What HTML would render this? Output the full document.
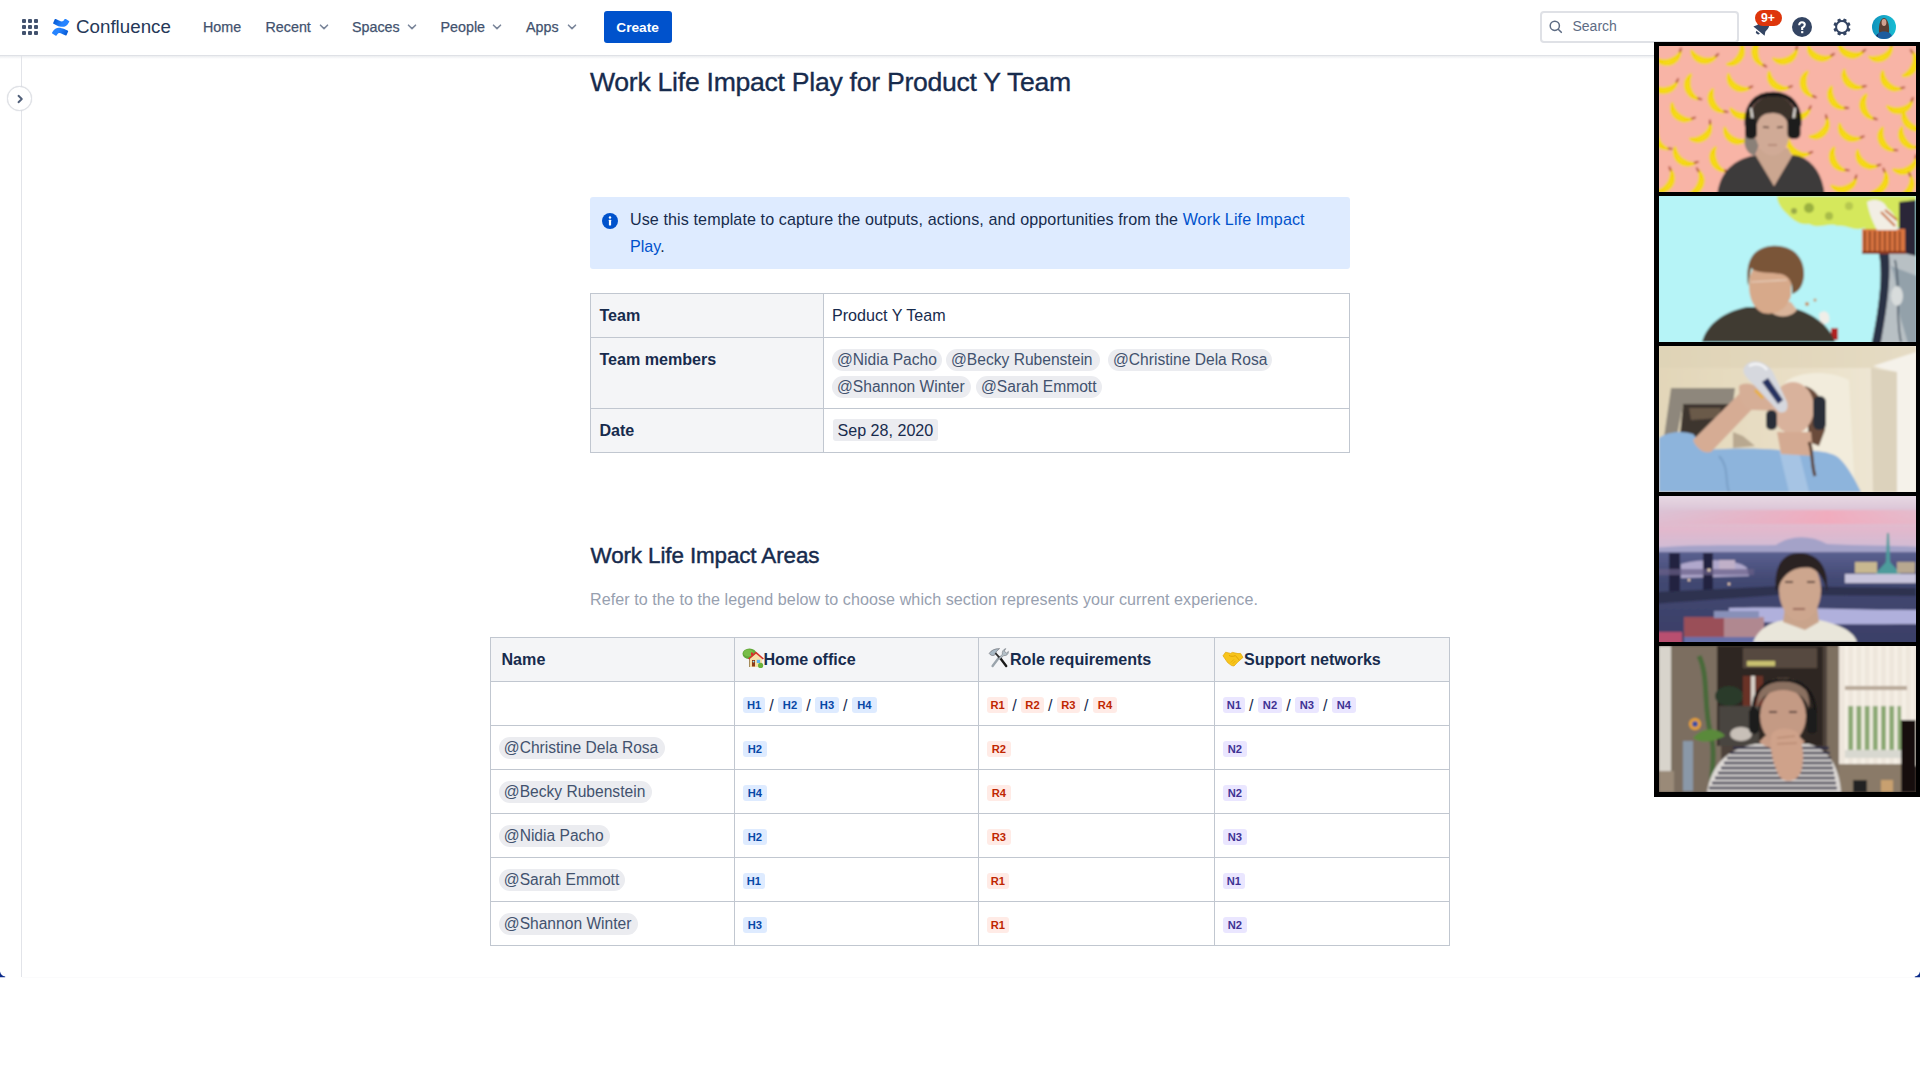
<!DOCTYPE html>
<html><head><meta charset="utf-8"><style>
html,body{margin:0;padding:0;}
body{width:1920px;height:1080px;overflow:hidden;position:relative;background:#fff;font-family:"Liberation Sans", sans-serif;}
.t{position:absolute;white-space:nowrap;}
</style></head><body>
<div style="position:absolute;left:0px;top:0px;width:1920px;height:55px;background:#fff;"></div>
<div style="position:absolute;left:0px;top:55px;width:1920px;height:1px;background:#DFE1E6;"></div>
<div style="position:absolute;left:0px;top:56px;width:1920px;height:3px;background:linear-gradient(rgba(9,30,66,0.08),rgba(9,30,66,0));"></div>
<div style="position:absolute;left:22px;top:19px;width:4px;height:4px;background:#42526E;border-radius:1px;"></div>
<div style="position:absolute;left:22px;top:25px;width:4px;height:4px;background:#42526E;border-radius:1px;"></div>
<div style="position:absolute;left:22px;top:31px;width:4px;height:4px;background:#42526E;border-radius:1px;"></div>
<div style="position:absolute;left:28px;top:19px;width:4px;height:4px;background:#42526E;border-radius:1px;"></div>
<div style="position:absolute;left:28px;top:25px;width:4px;height:4px;background:#42526E;border-radius:1px;"></div>
<div style="position:absolute;left:28px;top:31px;width:4px;height:4px;background:#42526E;border-radius:1px;"></div>
<div style="position:absolute;left:34px;top:19px;width:4px;height:4px;background:#42526E;border-radius:1px;"></div>
<div style="position:absolute;left:34px;top:25px;width:4px;height:4px;background:#42526E;border-radius:1px;"></div>
<div style="position:absolute;left:34px;top:31px;width:4px;height:4px;background:#42526E;border-radius:1px;"></div>
<svg style="position:absolute;left:51.5px;top:19px" width="18.5" height="16.5" viewBox="0 0 18 16">
<defs><linearGradient id="cgt" x1="0" y1="0" x2="1" y2="0.3"><stop offset="0" stop-color="#0052CC"/><stop offset="0.7" stop-color="#2684FF"/></linearGradient>
<linearGradient id="cgb" x1="1" y1="1" x2="0" y2="0.7"><stop offset="0" stop-color="#0052CC"/><stop offset="0.7" stop-color="#2684FF"/></linearGradient></defs>
<path d="M0.6 12.4c-.2.3-.4.7-.6 1 -.1.3 0 .6.3.8l3.3 2c.3.2.6.1.8-.2.1-.2.3-.5.5-.8 1.3-2.2 2.7-1.9 5.1-.7l3.3 1.6c.3.1.6 0 .8-.3l1.6-3.6c.1-.3 0-.6-.3-.8-.7-.3-2.1-1-3.4-1.6C7.3 7.5 3.1 7.7.6 12.4z" fill="url(#cgb)"/>
<path d="M17.4 3.6c.2-.3.4-.7.6-1 .1-.3 0-.6-.3-.8l-3.3-2c-.3-.2-.6-.1-.8.2-.1.2-.3.5-.5.8-1.3 2.2-2.7 1.9-5.1.7L4.7-.1c-.3-.1-.6 0-.8.3L2.3 3.8c-.1.3 0 .6.3.8.7.3 2.1 1 3.4 1.6 4.7 2.3 8.9 2.1 11.4-2.6z" fill="url(#cgt)" transform="translate(-1.2,0)"/>
</svg>
<div class="t" style="left:76px;top:18.03px;font-size:18.75px;line-height:18.75px;color:#253858;font-weight:400;">Confluence</div>
<div class="t" style="left:203px;top:19.80px;font-size:14.3px;line-height:14.3px;color:#42526E;font-weight:400;-webkit-text-stroke:0.25px #42526E;">Home</div>
<div class="t" style="left:265.5px;top:19.80px;font-size:14.3px;line-height:14.3px;color:#42526E;font-weight:400;-webkit-text-stroke:0.25px #42526E;">Recent</div>
<div class="t" style="left:352px;top:19.80px;font-size:14.3px;line-height:14.3px;color:#42526E;font-weight:400;-webkit-text-stroke:0.25px #42526E;">Spaces</div>
<div class="t" style="left:440.5px;top:19.80px;font-size:14.3px;line-height:14.3px;color:#42526E;font-weight:400;-webkit-text-stroke:0.25px #42526E;">People</div>
<div class="t" style="left:526px;top:19.80px;font-size:14.3px;line-height:14.3px;color:#42526E;font-weight:400;-webkit-text-stroke:0.25px #42526E;">Apps</div>
<svg style="position:absolute;left:319px;top:22px" width="10" height="10" viewBox="0 0 10 10"><path d="M1.5 3.2 L5 6.6 L8.5 3.2" fill="none" stroke="#7A869A" stroke-width="1.6" stroke-linecap="round" stroke-linejoin="round"/></svg>
<svg style="position:absolute;left:407px;top:22px" width="10" height="10" viewBox="0 0 10 10"><path d="M1.5 3.2 L5 6.6 L8.5 3.2" fill="none" stroke="#7A869A" stroke-width="1.6" stroke-linecap="round" stroke-linejoin="round"/></svg>
<svg style="position:absolute;left:492px;top:22px" width="10" height="10" viewBox="0 0 10 10"><path d="M1.5 3.2 L5 6.6 L8.5 3.2" fill="none" stroke="#7A869A" stroke-width="1.6" stroke-linecap="round" stroke-linejoin="round"/></svg>
<svg style="position:absolute;left:566.5px;top:22px" width="10" height="10" viewBox="0 0 10 10"><path d="M1.5 3.2 L5 6.6 L8.5 3.2" fill="none" stroke="#7A869A" stroke-width="1.6" stroke-linecap="round" stroke-linejoin="round"/></svg>
<div style="position:absolute;left:604px;top:11px;width:68px;height:32px;background:#0052CC;border-radius:3px;"></div>
<div class="t" style="left:616.3px;top:21.20px;font-size:13.7px;line-height:13.7px;color:#fff;font-weight:700;">Create</div>
<div style="position:absolute;left:1540px;top:11px;width:199px;height:32px;box-sizing:border-box;border:2px solid #DFE1E6;border-radius:4px;background:#fff;"></div>
<svg style="position:absolute;left:1549px;top:20px" width="14" height="14" viewBox="0 0 14 14"><circle cx="5.8" cy="5.8" r="4.6" fill="none" stroke="#5E6C84" stroke-width="1.5"/><path d="M9.2 9.2 L12.3 12.3" stroke="#5E6C84" stroke-width="1.6" stroke-linecap="round"/></svg>
<div class="t" style="left:1572.5px;top:19.15px;font-size:14px;line-height:14px;color:#5E6C84;font-weight:400;">Search</div>
<svg style="position:absolute;left:1751px;top:16px" width="22.5" height="22.5" viewBox="0 0 24 24"><g transform="rotate(40 12 12)"><path d="M12 3.5 C8.6 3.5 6.4 6.2 6.4 9.6 V13.6 L4.2 17.4 H19.8 L17.6 13.6 V9.6 C17.6 6.2 15.4 3.5 12 3.5Z" fill="#344563"/><path d="M9.6 18.8 a2.4 2.4 0 0 0 4.8 0Z" fill="#344563"/></g></svg>
<div style="position:absolute;left:1755px;top:10px;width:27px;height:16px;background:#DE350B;border-radius:8px;box-shadow:0 0 0 0px #fff;"></div>
<div class="t" style="left:1761px;top:12.27px;font-size:12.2px;line-height:12.2px;color:#fff;font-weight:700;">9+</div>
<svg style="position:absolute;left:1792px;top:17px" width="20" height="20" viewBox="0 0 20 20"><circle cx="10" cy="10" r="10" fill="#344563"/><path d="M7.2 8.3 C7.2 6.4 8.5 5.2 10 5.2 C11.6 5.2 12.8 6.4 12.8 7.8 C12.8 9.4 11.6 10 10.4 10.6 L10.2 10.7 L10.2 13" fill="none" stroke="#fff" stroke-width="2.1" stroke-linecap="butt"/><rect x="9.1" y="14.1" width="2.2" height="2.1" fill="#fff"/></svg>
<svg style="position:absolute;left:1831.7px;top:16.5px" width="20" height="20" viewBox="0 0 20 20"><g transform="translate(10,10)" fill="#344563">
<circle r="6.9"/><rect x="-1.7" y="-8.7" width="3.4" height="4" rx="0.9" transform="rotate(22.5)"/><rect x="-1.7" y="-8.7" width="3.4" height="4" rx="0.9" transform="rotate(67.5)"/><rect x="-1.7" y="-8.7" width="3.4" height="4" rx="0.9" transform="rotate(112.5)"/><rect x="-1.7" y="-8.7" width="3.4" height="4" rx="0.9" transform="rotate(157.5)"/><rect x="-1.7" y="-8.7" width="3.4" height="4" rx="0.9" transform="rotate(202.5)"/><rect x="-1.7" y="-8.7" width="3.4" height="4" rx="0.9" transform="rotate(247.5)"/><rect x="-1.7" y="-8.7" width="3.4" height="4" rx="0.9" transform="rotate(292.5)"/><rect x="-1.7" y="-8.7" width="3.4" height="4" rx="0.9" transform="rotate(337.5)"/><circle r="4.9" fill="#fff"/></g></svg>
<svg style="position:absolute;left:1872px;top:15px" width="24" height="24" viewBox="0 0 24 24"><defs><clipPath id="av"><circle cx="12" cy="12" r="12"/></clipPath><linearGradient id="avg" x1="0" x2="1"><stop offset="0" stop-color="#0E93BC"/><stop offset="0.5" stop-color="#18A8C8"/><stop offset="1" stop-color="#16BCD2"/></linearGradient><filter id="avb"><feGaussianBlur stdDeviation="0.5"/></filter></defs>
<g clip-path="url(#av)"><rect width="24" height="24" fill="url(#avg)"/><g filter="url(#avb)"><path d="M7 18 C6.5 12 7.5 3.5 12 3 C16.5 3.5 17.5 12 17 18Z" fill="#5A3E30"/><ellipse cx="12" cy="7.5" rx="2.4" ry="3.4" fill="#D0A090"/><path d="M3 25 C3.5 19 7 16.5 12 16.5 C17 16.5 20.5 19 21 25Z" fill="#1D5C9E"/><path d="M3 25 C3 22 4 20 6 19 L6 25Z" fill="#0A3A70"/></g></g></svg>
<div style="position:absolute;left:21px;top:56px;width:1px;height:921px;background:#E2E4E9;"></div>
<div style="position:absolute;left:7px;top:86px;width:25px;height:25px;box-sizing:border-box;border-radius:50%;background:#fff;border:1px solid #DFE1E6;box-shadow:0 0 1px rgba(9,30,66,0.2);"></div>
<svg style="position:absolute;left:15px;top:94px" width="10" height="10" viewBox="0 0 10 10"><path d="M3.5 1.8 L6.8 5 L3.5 8.2" fill="none" stroke="#505F79" stroke-width="1.9" stroke-linecap="round" stroke-linejoin="round"/></svg>
<div class="t" style="left:590px;top:69.28px;font-size:26.6px;line-height:26.6px;color:#172B4D;font-weight:400;letter-spacing:-0.27px;-webkit-text-stroke:0.35px #172B4D;">Work Life Impact Play for Product Y Team</div>
<div style="position:absolute;left:590px;top:197px;width:760px;height:72px;background:#DEEBFF;border-radius:3px;"></div>
<svg style="position:absolute;left:602px;top:213px" width="16" height="16" viewBox="0 0 16 16"><circle cx="8" cy="8" r="8" fill="#0052CC"/><rect x="6.9" y="6.8" width="2.2" height="5.6" rx="0.4" fill="#fff"/><circle cx="8" cy="4.5" r="1.2" fill="#fff"/></svg>
<div class="t" style="left:630px;top:210.97px;font-size:16.1px;line-height:16.1px;color:#172B4D;font-weight:400;letter-spacing:0.1px;">Use this template to capture the outputs, actions, and opportunities from the <span style="color:#0052CC">Work Life Impact</span></div>
<div class="t" style="left:630px;top:238.17px;font-size:16.1px;line-height:16.1px;color:#172B4D;font-weight:400;"><span style="color:#0052CC">Play</span>.</div>
<div style="position:absolute;left:590px;top:293px;width:760px;height:160px;box-sizing:border-box;border:1px solid #C1C7D0;background:#fff;"></div>
<div style="position:absolute;left:591px;top:294px;width:232px;height:158px;background:#F4F5F7;"></div>
<div style="position:absolute;left:823px;top:294px;width:1px;height:158px;background:#C1C7D0;"></div>
<div style="position:absolute;left:591px;top:337px;width:758px;height:1px;background:#C1C7D0;"></div>
<div style="position:absolute;left:591px;top:408px;width:758px;height:1px;background:#C1C7D0;"></div>
<div class="t" style="left:599.4px;top:307.27px;font-size:16.1px;line-height:16.1px;color:#172B4D;font-weight:700;">Team</div>
<div class="t" style="left:599.4px;top:350.97px;font-size:16.1px;line-height:16.1px;color:#172B4D;font-weight:700;">Team members</div>
<div class="t" style="left:599.4px;top:421.87px;font-size:16.1px;line-height:16.1px;color:#172B4D;font-weight:700;">Date</div>
<div class="t" style="left:832px;top:307.27px;font-size:16.1px;line-height:16.1px;color:#172B4D;font-weight:400;">Product Y Team</div>
<div style="position:absolute;left:832px;top:349.2px;width:110px;height:21.5px;background:#EBECF0;border-radius:11px;"></div>
<div class="t" style="left:837px;top:351.99px;font-size:15.6px;line-height:15.6px;color:#42526E;font-weight:400;">@Nidia Pacho</div>
<div style="position:absolute;left:946px;top:349.2px;width:154px;height:21.5px;background:#EBECF0;border-radius:11px;"></div>
<div class="t" style="left:951px;top:351.99px;font-size:15.6px;line-height:15.6px;color:#42526E;font-weight:400;">@Becky Rubenstein</div>
<div style="position:absolute;left:1108px;top:349.2px;width:164px;height:21.5px;background:#EBECF0;border-radius:11px;"></div>
<div class="t" style="left:1113px;top:351.99px;font-size:15.6px;line-height:15.6px;color:#42526E;font-weight:400;">@Christine Dela Rosa</div>
<div style="position:absolute;left:832px;top:376.3px;width:139px;height:21.5px;background:#EBECF0;border-radius:11px;"></div>
<div class="t" style="left:837px;top:379.19px;font-size:15.6px;line-height:15.6px;color:#42526E;font-weight:400;">@Shannon Winter</div>
<div style="position:absolute;left:976px;top:376.3px;width:126px;height:21.5px;background:#EBECF0;border-radius:11px;"></div>
<div class="t" style="left:981px;top:379.19px;font-size:15.6px;line-height:15.6px;color:#42526E;font-weight:400;">@Sarah Emmott</div>
<div style="position:absolute;left:833px;top:419px;width:105px;height:22px;background:#EBECF0;border-radius:3px;"></div>
<div class="t" style="left:837.5px;top:421.87px;font-size:16.1px;line-height:16.1px;color:#172B4D;font-weight:400;">Sep 28, 2020</div>
<div class="t" style="left:590.5px;top:544.74px;font-size:22.4px;line-height:22.4px;color:#172B4D;font-weight:400;letter-spacing:-0.1px;-webkit-text-stroke:0.45px #172B4D;">Work Life Impact Areas</div>
<div class="t" style="left:590px;top:591.17px;font-size:16.1px;line-height:16.1px;color:#97A0AF;font-weight:400;letter-spacing:0.065px;">Refer to the to the legend below to choose which section represents your current experience.</div>
<div style="position:absolute;left:490px;top:637px;width:960px;height:309px;background:#fff;"></div>
<div style="position:absolute;left:491px;top:638px;width:958px;height:43px;background:#F4F5F7;"></div>
<div style="position:absolute;left:490px;top:637px;width:1px;height:309px;background:#C1C7D0;"></div>
<div style="position:absolute;left:734px;top:637px;width:1px;height:309px;background:#C1C7D0;"></div>
<div style="position:absolute;left:978px;top:637px;width:1px;height:309px;background:#C1C7D0;"></div>
<div style="position:absolute;left:1214px;top:637px;width:1px;height:309px;background:#C1C7D0;"></div>
<div style="position:absolute;left:1449px;top:637px;width:1px;height:309px;background:#C1C7D0;"></div>
<div style="position:absolute;left:490px;top:637px;width:960px;height:1px;background:#C1C7D0;"></div>
<div style="position:absolute;left:490px;top:681px;width:960px;height:1px;background:#C1C7D0;"></div>
<div style="position:absolute;left:490px;top:725px;width:960px;height:1px;background:#C1C7D0;"></div>
<div style="position:absolute;left:490px;top:769px;width:960px;height:1px;background:#C1C7D0;"></div>
<div style="position:absolute;left:490px;top:813px;width:960px;height:1px;background:#C1C7D0;"></div>
<div style="position:absolute;left:490px;top:857px;width:960px;height:1px;background:#C1C7D0;"></div>
<div style="position:absolute;left:490px;top:901px;width:960px;height:1px;background:#C1C7D0;"></div>
<div style="position:absolute;left:490px;top:945px;width:960px;height:1px;background:#C1C7D0;"></div>
<div class="t" style="left:501.5px;top:651.37px;font-size:16.1px;line-height:16.1px;color:#172B4D;font-weight:700;">Name</div>
<svg style="position:absolute;left:738px;top:644px" width="30" height="28" viewBox="0 0 30 28"><rect x="11.2" y="14" width="1" height="9" fill="#7A5A20"/><ellipse cx="11.5" cy="9.8" rx="7" ry="5.3" fill="#62A83A"/><ellipse cx="10.5" cy="9" rx="5" ry="3.6" fill="#78BE48"/><rect x="13" y="8.5" width="2" height="3" fill="#D8302A"/><path d="M11.8 14.5 L18 9 L24.2 14.5 L24.2 23 L11.8 23Z" fill="#F6DFA8"/><path d="M10.6 15 L18 8.6 L25.4 15" fill="none" stroke="#D4322A" stroke-width="1.6" stroke-linejoin="round"/><rect x="14" y="16" width="3" height="6.5" fill="#8A3A18"/><circle cx="15.5" cy="17.6" r="0.9" fill="#8AE0FF"/><rect x="18.8" y="15.8" width="3.3" height="3.2" fill="#5AB4F0"/><circle cx="22.6" cy="21.4" r="2.6" fill="#6AB23A"/></svg>
<svg style="position:absolute;left:984px;top:644px" width="30" height="28" viewBox="0 0 30 28"><path d="M15.8 13.6 L22.2 22" stroke="#1A1A1A" stroke-width="2.4" stroke-linecap="round"/><path d="M15.2 13.2 L8.6 22" stroke="#9AA4AC" stroke-width="2.4" stroke-linecap="round"/><path d="M5.2 9.4 C7 6.4 10.6 4.6 15.6 4.6 L13.2 6.8 C11.6 7.8 12.2 10 10.2 11.2 C8.6 12 6.4 11.4 5.2 9.4Z" fill="#A8B8C4" stroke="#6A6A70" stroke-width="0.6"/><path d="M11.4 9.2 L16.2 14.4" stroke="#2A2A2A" stroke-width="1.8"/><path d="M24.4 7.4 C24.6 10.2 22.4 12 19.8 11.6 L15.6 15.2 L14.6 14.2 L18.4 10.2 C17.8 7.8 19.2 5.2 21.8 4.6 L20.2 7.2 L22.6 9 Z" fill="#B4C0C8" stroke="#70767C" stroke-width="0.6"/></svg>
<svg style="position:absolute;left:1218px;top:644px" width="30" height="28" viewBox="0 0 30 28"><path d="M5 11.8 L7.6 8.2 L12.6 9.4 L14.4 8.4 L20 9.6 L22.6 9.4 L25 13.4 L20 17.8 L16 22 L13.6 21.6 L9.6 18.6Z" fill="#F8C51C" stroke="#E0A400" stroke-width="0.7" stroke-linejoin="round"/><path d="M11 11.4 C13 12.6 15 12.6 17.4 11.6 L21.4 16.2" fill="none" stroke="#D89A00" stroke-width="0.8"/><path d="M14.6 19.8 L17.6 16.8 M12.8 18.6 L16 15.4" stroke="#E0A400" stroke-width="0.7"/></svg>
<div class="t" style="left:763.5px;top:651.37px;font-size:16.1px;line-height:16.1px;color:#172B4D;font-weight:700;">Home office</div>
<div class="t" style="left:1010px;top:651.37px;font-size:16.1px;line-height:16.1px;color:#172B4D;font-weight:700;">Role requirements</div>
<div class="t" style="left:1244px;top:651.37px;font-size:16.1px;line-height:16.1px;color:#172B4D;font-weight:700;">Support networks</div>
<div style="position:absolute;left:743.2px;top:697px;width:21.6px;height:15.5px;background:#DEEBFF;border-radius:3px;"></div>
<div class="t" style="left:746.9000000000001px;top:699.72px;font-size:11.2px;line-height:11.2px;color:#0747A6;font-weight:700;">H1</div>
<div class="t" style="left:769.2px;top:697.37px;font-size:16.1px;line-height:16.1px;color:#172B4D;font-weight:400;">/</div>
<div style="position:absolute;left:778.2px;top:697px;width:23.5px;height:15.5px;background:#DEEBFF;border-radius:3px;"></div>
<div class="t" style="left:782.8500000000001px;top:699.72px;font-size:11.2px;line-height:11.2px;color:#0747A6;font-weight:700;">H2</div>
<div class="t" style="left:806.1500000000001px;top:697.37px;font-size:16.1px;line-height:16.1px;color:#172B4D;font-weight:400;">/</div>
<div style="position:absolute;left:815.2px;top:697px;width:23.5px;height:15.5px;background:#DEEBFF;border-radius:3px;"></div>
<div class="t" style="left:819.8500000000001px;top:699.72px;font-size:11.2px;line-height:11.2px;color:#0747A6;font-weight:700;">H3</div>
<div class="t" style="left:843.0500000000001px;top:697.37px;font-size:16.1px;line-height:16.1px;color:#172B4D;font-weight:400;">/</div>
<div style="position:absolute;left:852px;top:697px;width:24.5px;height:15.5px;background:#DEEBFF;border-radius:3px;"></div>
<div class="t" style="left:857.1500000000001px;top:699.72px;font-size:11.2px;line-height:11.2px;color:#0747A6;font-weight:700;">H4</div>
<div style="position:absolute;left:987.1px;top:697px;width:20.8px;height:15.5px;background:#FFEBE6;border-radius:3px;"></div>
<div class="t" style="left:990.4000000000001px;top:699.72px;font-size:11.2px;line-height:11.2px;color:#BF2600;font-weight:700;">R1</div>
<div class="t" style="left:1012.25px;top:697.37px;font-size:16.1px;line-height:16.1px;color:#172B4D;font-weight:400;">/</div>
<div style="position:absolute;left:1021.2px;top:697px;width:22.5px;height:15.5px;background:#FFEBE6;border-radius:3px;"></div>
<div class="t" style="left:1025.3500000000001px;top:699.72px;font-size:11.2px;line-height:11.2px;color:#BF2600;font-weight:700;">R2</div>
<div class="t" style="left:1048.05px;top:697.37px;font-size:16.1px;line-height:16.1px;color:#172B4D;font-weight:400;">/</div>
<div style="position:absolute;left:1057px;top:697px;width:22.6px;height:15.5px;background:#FFEBE6;border-radius:3px;"></div>
<div class="t" style="left:1061.2px;top:699.72px;font-size:11.2px;line-height:11.2px;color:#BF2600;font-weight:700;">R3</div>
<div class="t" style="left:1084.1000000000001px;top:697.37px;font-size:16.1px;line-height:16.1px;color:#172B4D;font-weight:400;">/</div>
<div style="position:absolute;left:1093.2px;top:697px;width:23.5px;height:15.5px;background:#FFEBE6;border-radius:3px;"></div>
<div class="t" style="left:1097.8500000000001px;top:699.72px;font-size:11.2px;line-height:11.2px;color:#BF2600;font-weight:700;">R4</div>
<div style="position:absolute;left:1223px;top:697px;width:21.8px;height:15.5px;background:#EAE6FF;border-radius:3px;"></div>
<div class="t" style="left:1226.8px;top:699.72px;font-size:11.2px;line-height:11.2px;color:#403294;font-weight:700;">N1</div>
<div class="t" style="left:1249.1000000000001px;top:697.37px;font-size:16.1px;line-height:16.1px;color:#172B4D;font-weight:400;">/</div>
<div style="position:absolute;left:1258px;top:697px;width:23.9px;height:15.5px;background:#EAE6FF;border-radius:3px;"></div>
<div class="t" style="left:1262.8500000000001px;top:699.72px;font-size:11.2px;line-height:11.2px;color:#403294;font-weight:700;">N2</div>
<div class="t" style="left:1286.15px;top:697.37px;font-size:16.1px;line-height:16.1px;color:#172B4D;font-weight:400;">/</div>
<div style="position:absolute;left:1295px;top:697px;width:23.7px;height:15.5px;background:#EAE6FF;border-radius:3px;"></div>
<div class="t" style="left:1299.75px;top:699.72px;font-size:11.2px;line-height:11.2px;color:#403294;font-weight:700;">N3</div>
<div class="t" style="left:1323.05px;top:697.37px;font-size:16.1px;line-height:16.1px;color:#172B4D;font-weight:400;">/</div>
<div style="position:absolute;left:1332px;top:697px;width:23.7px;height:15.5px;background:#EAE6FF;border-radius:3px;"></div>
<div class="t" style="left:1336.75px;top:699.72px;font-size:11.2px;line-height:11.2px;color:#403294;font-weight:700;">N4</div>
<div style="position:absolute;left:499px;top:737px;width:165.5px;height:21.5px;background:#EBECF0;border-radius:11px;"></div>
<div class="t" style="left:503.8px;top:739.99px;font-size:15.6px;line-height:15.6px;color:#42526E;font-weight:400;">@Christine Dela Rosa</div>
<div style="position:absolute;left:743px;top:741px;width:23.6px;height:15.5px;background:#DEEBFF;border-radius:3px;"></div>
<div class="t" style="left:747.7px;top:743.72px;font-size:11.2px;line-height:11.2px;color:#0747A6;font-weight:700;">H2</div>
<div style="position:absolute;left:987px;top:741px;width:23.6px;height:15.5px;background:#FFEBE6;border-radius:3px;"></div>
<div class="t" style="left:991.7px;top:743.72px;font-size:11.2px;line-height:11.2px;color:#BF2600;font-weight:700;">R2</div>
<div style="position:absolute;left:1223px;top:741px;width:23.6px;height:15.5px;background:#EAE6FF;border-radius:3px;"></div>
<div class="t" style="left:1227.7px;top:743.72px;font-size:11.2px;line-height:11.2px;color:#403294;font-weight:700;">N2</div>
<div style="position:absolute;left:499px;top:781px;width:152.515625px;height:21.5px;background:#EBECF0;border-radius:11px;"></div>
<div class="t" style="left:503.8px;top:783.99px;font-size:15.6px;line-height:15.6px;color:#42526E;font-weight:400;">@Becky Rubenstein</div>
<div style="position:absolute;left:743px;top:785px;width:23.6px;height:15.5px;background:#DEEBFF;border-radius:3px;"></div>
<div class="t" style="left:747.7px;top:787.72px;font-size:11.2px;line-height:11.2px;color:#0747A6;font-weight:700;">H4</div>
<div style="position:absolute;left:987px;top:785px;width:23.6px;height:15.5px;background:#FFEBE6;border-radius:3px;"></div>
<div class="t" style="left:991.7px;top:787.72px;font-size:11.2px;line-height:11.2px;color:#BF2600;font-weight:700;">R4</div>
<div style="position:absolute;left:1223px;top:785px;width:23.6px;height:15.5px;background:#EAE6FF;border-radius:3px;"></div>
<div class="t" style="left:1227.7px;top:787.72px;font-size:11.2px;line-height:11.2px;color:#403294;font-weight:700;">N2</div>
<div style="position:absolute;left:499px;top:825px;width:110.921875px;height:21.5px;background:#EBECF0;border-radius:11px;"></div>
<div class="t" style="left:503.8px;top:827.99px;font-size:15.6px;line-height:15.6px;color:#42526E;font-weight:400;">@Nidia Pacho</div>
<div style="position:absolute;left:743px;top:829px;width:23.6px;height:15.5px;background:#DEEBFF;border-radius:3px;"></div>
<div class="t" style="left:747.7px;top:831.72px;font-size:11.2px;line-height:11.2px;color:#0747A6;font-weight:700;">H2</div>
<div style="position:absolute;left:987px;top:829px;width:23.6px;height:15.5px;background:#FFEBE6;border-radius:3px;"></div>
<div class="t" style="left:991.7px;top:831.72px;font-size:11.2px;line-height:11.2px;color:#BF2600;font-weight:700;">R3</div>
<div style="position:absolute;left:1223px;top:829px;width:23.6px;height:15.5px;background:#EAE6FF;border-radius:3px;"></div>
<div class="t" style="left:1227.7px;top:831.72px;font-size:11.2px;line-height:11.2px;color:#403294;font-weight:700;">N3</div>
<div style="position:absolute;left:499px;top:869px;width:126.46875px;height:21.5px;background:#EBECF0;border-radius:11px;"></div>
<div class="t" style="left:503.8px;top:871.99px;font-size:15.6px;line-height:15.6px;color:#42526E;font-weight:400;">@Sarah Emmott</div>
<div style="position:absolute;left:743px;top:873px;width:21.6px;height:15.5px;background:#DEEBFF;border-radius:3px;"></div>
<div class="t" style="left:746.7px;top:875.72px;font-size:11.2px;line-height:11.2px;color:#0747A6;font-weight:700;">H1</div>
<div style="position:absolute;left:987px;top:873px;width:21.6px;height:15.5px;background:#FFEBE6;border-radius:3px;"></div>
<div class="t" style="left:990.7px;top:875.72px;font-size:11.2px;line-height:11.2px;color:#BF2600;font-weight:700;">R1</div>
<div style="position:absolute;left:1223px;top:873px;width:21.6px;height:15.5px;background:#EAE6FF;border-radius:3px;"></div>
<div class="t" style="left:1226.7px;top:875.72px;font-size:11.2px;line-height:11.2px;color:#403294;font-weight:700;">N1</div>
<div style="position:absolute;left:499px;top:913px;width:138.640625px;height:21.5px;background:#EBECF0;border-radius:11px;"></div>
<div class="t" style="left:503.8px;top:915.99px;font-size:15.6px;line-height:15.6px;color:#42526E;font-weight:400;">@Shannon Winter</div>
<div style="position:absolute;left:743px;top:917px;width:23.6px;height:15.5px;background:#DEEBFF;border-radius:3px;"></div>
<div class="t" style="left:747.7px;top:919.72px;font-size:11.2px;line-height:11.2px;color:#0747A6;font-weight:700;">H3</div>
<div style="position:absolute;left:987px;top:917px;width:21.6px;height:15.5px;background:#FFEBE6;border-radius:3px;"></div>
<div class="t" style="left:990.7px;top:919.72px;font-size:11.2px;line-height:11.2px;color:#BF2600;font-weight:700;">R1</div>
<div style="position:absolute;left:1223px;top:917px;width:23.6px;height:15.5px;background:#EAE6FF;border-radius:3px;"></div>
<div class="t" style="left:1227.7px;top:919.72px;font-size:11.2px;line-height:11.2px;color:#403294;font-weight:700;">N2</div>
<div style="position:absolute;left:22px;top:977px;width:1898px;height:1px;background:#FBFBFC;"></div>
<svg style="position:absolute;left:0px;top:971px" width="6" height="7" viewBox="0 0 6 7"><path d="M0 0.5 C0.6 3.5 2.5 5 5.2 5.6 L5.2 6.2 L0 6.2Z" fill="#0A2A8A"/></svg>
<svg style="position:absolute;left:1914px;top:971px" width="6" height="7" viewBox="0 0 6 7"><path d="M6 0.5 C5.4 3.5 3.5 5 0.8 5.6 L0.8 6.2 L6 6.2Z" fill="#0A2A8A"/></svg>
<div id="videos"></div>
<div style="position:absolute;left:1654px;top:42px;width:266px;height:755px;background:#000;"></div>
<svg style="position:absolute;left:1659px;top:46px" width="257" height="146" viewBox="0 0 257 146"><defs><clipPath id="tc1"><rect width="257" height="146"/></clipPath><filter id="bl1" x="-5%" y="-5%" width="110%" height="110%"><feGaussianBlur stdDeviation="0.8"/></filter></defs><g clip-path="url(#tc1)"><g filter="url(#bl1)"><rect x="-5" y="-5" width="267" height="156" fill="#F8B4A6"/><g transform="translate(10.265335235378032,11.691868758915835) rotate(-20) scale(1.05)"><path d="M-12 -3 C-10 8 7 10 12 -2 C7 3 -4 4 -12 -3Z" fill="#F8DE22" stroke="#F3D510" stroke-width="2.6" stroke-linejoin="round"/><path d="M11.5 -2 L13.5 -4.5" stroke="#B04A30" stroke-width="1.8" stroke-linecap="round"/></g><g transform="translate(44.502139800285306,10.265335235378032) rotate(10) scale(1.05)"><path d="M-12 -3 C-10 8 7 10 12 -2 C7 3 -4 4 -12 -3Z" fill="#F8DE22" stroke="#F3D510" stroke-width="2.6" stroke-linejoin="round"/><path d="M11.5 -2 L13.5 -4.5" stroke="#B04A30" stroke-width="1.8" stroke-linecap="round"/></g><g transform="translate(77.31241084165478,8.838801711840228) rotate(-60) scale(1.05)"><path d="M-12 -3 C-10 8 7 10 12 -2 C7 3 -4 4 -12 -3Z" fill="#F8DE22" stroke="#F3D510" stroke-width="2.6" stroke-linejoin="round"/><path d="M11.5 -2 L13.5 -4.5" stroke="#B04A30" stroke-width="1.8" stroke-linecap="round"/></g><g transform="translate(100.13694721825964,7.412268188302425) rotate(80) scale(1.05)"><path d="M-12 -3 C-10 8 7 10 12 -2 C7 3 -4 4 -12 -3Z" fill="#F8DE22" stroke="#F3D510" stroke-width="2.6" stroke-linejoin="round"/><path d="M11.5 -2 L13.5 -4.5" stroke="#B04A30" stroke-width="1.8" stroke-linecap="round"/></g><g transform="translate(127.2410841654779,10.265335235378032) rotate(-25) scale(1.05)"><path d="M-12 -3 C-10 8 7 10 12 -2 C7 3 -4 4 -12 -3Z" fill="#F8DE22" stroke="#F3D510" stroke-width="2.6" stroke-linejoin="round"/><path d="M11.5 -2 L13.5 -4.5" stroke="#B04A30" stroke-width="1.8" stroke-linecap="round"/></g><g transform="translate(160.05135520684738,7.412268188302425) rotate(20) scale(1.05)"><path d="M-12 -3 C-10 8 7 10 12 -2 C7 3 -4 4 -12 -3Z" fill="#F8DE22" stroke="#F3D510" stroke-width="2.6" stroke-linejoin="round"/><path d="M11.5 -2 L13.5 -4.5" stroke="#B04A30" stroke-width="1.8" stroke-linecap="round"/></g><g transform="translate(191.43509272467904,4.5592011412268185) rotate(15) scale(1.05)"><path d="M-12 -3 C-10 8 7 10 12 -2 C7 3 -4 4 -12 -3Z" fill="#F8DE22" stroke="#F3D510" stroke-width="2.6" stroke-linejoin="round"/><path d="M11.5 -2 L13.5 -4.5" stroke="#B04A30" stroke-width="1.8" stroke-linecap="round"/></g><g transform="translate(222.8188302425107,7.412268188302425) rotate(-30) scale(1.05)"><path d="M-12 -3 C-10 8 7 10 12 -2 C7 3 -4 4 -12 -3Z" fill="#F8DE22" stroke="#F3D510" stroke-width="2.6" stroke-linejoin="round"/><path d="M11.5 -2 L13.5 -4.5" stroke="#B04A30" stroke-width="1.8" stroke-linecap="round"/></g><g transform="translate(251.34950071326676,18.82453637660485) rotate(-70) scale(1.05)"><path d="M-12 -3 C-10 8 7 10 12 -2 C7 3 -4 4 -12 -3Z" fill="#F8DE22" stroke="#F3D510" stroke-width="2.6" stroke-linejoin="round"/><path d="M11.5 -2 L13.5 -4.5" stroke="#B04A30" stroke-width="1.8" stroke-linecap="round"/></g><g transform="translate(5.985734664764623,40.222539229671895) rotate(-10) scale(1.05)"><path d="M-12 -3 C-10 8 7 10 12 -2 C7 3 -4 4 -12 -3Z" fill="#F8DE22" stroke="#F3D510" stroke-width="2.6" stroke-linejoin="round"/><path d="M11.5 -2 L13.5 -4.5" stroke="#B04A30" stroke-width="1.8" stroke-linecap="round"/></g><g transform="translate(33.089871611982886,41.6490727532097) rotate(70) scale(1.05)"><path d="M-12 -3 C-10 8 7 10 12 -2 C7 3 -4 4 -12 -3Z" fill="#F8DE22" stroke="#F3D510" stroke-width="2.6" stroke-linejoin="round"/><path d="M11.5 -2 L13.5 -4.5" stroke="#B04A30" stroke-width="1.8" stroke-linecap="round"/></g><g transform="translate(78.73894436519258,37.36947218259629) rotate(30) scale(1.05)"><path d="M-12 -3 C-10 8 7 10 12 -2 C7 3 -4 4 -12 -3Z" fill="#F8DE22" stroke="#F3D510" stroke-width="2.6" stroke-linejoin="round"/><path d="M11.5 -2 L13.5 -4.5" stroke="#B04A30" stroke-width="1.8" stroke-linecap="round"/></g><g transform="translate(118.68188302425108,35.94293865905849) rotate(35) scale(1.05)"><path d="M-12 -3 C-10 8 7 10 12 -2 C7 3 -4 4 -12 -3Z" fill="#F8DE22" stroke="#F3D510" stroke-width="2.6" stroke-linejoin="round"/><path d="M11.5 -2 L13.5 -4.5" stroke="#B04A30" stroke-width="1.8" stroke-linecap="round"/></g><g transform="translate(148.63908701854493,38.796005706134096) rotate(75) scale(1.05)"><path d="M-12 -3 C-10 8 7 10 12 -2 C7 3 -4 4 -12 -3Z" fill="#F8DE22" stroke="#F3D510" stroke-width="2.6" stroke-linejoin="round"/><path d="M11.5 -2 L13.5 -4.5" stroke="#B04A30" stroke-width="1.8" stroke-linecap="round"/></g><g transform="translate(192.86162624821685,34.516405135520685) rotate(40) scale(1.05)"><path d="M-12 -3 C-10 8 7 10 12 -2 C7 3 -4 4 -12 -3Z" fill="#F8DE22" stroke="#F3D510" stroke-width="2.6" stroke-linejoin="round"/><path d="M11.5 -2 L13.5 -4.5" stroke="#B04A30" stroke-width="1.8" stroke-linecap="round"/></g><g transform="translate(231.37803138373752,35.94293865905849) rotate(40) scale(1.05)"><path d="M-12 -3 C-10 8 7 10 12 -2 C7 3 -4 4 -12 -3Z" fill="#F8DE22" stroke="#F3D510" stroke-width="2.6" stroke-linejoin="round"/><path d="M11.5 -2 L13.5 -4.5" stroke="#B04A30" stroke-width="1.8" stroke-linecap="round"/></g><g transform="translate(57.34094151212554,55.91440798858773) rotate(60) scale(1.05)"><path d="M-12 -3 C-10 8 7 10 12 -2 C7 3 -4 4 -12 -3Z" fill="#F8DE22" stroke="#F3D510" stroke-width="2.6" stroke-linejoin="round"/><path d="M11.5 -2 L13.5 -4.5" stroke="#B04A30" stroke-width="1.8" stroke-linecap="round"/></g><g transform="translate(177.169757489301,53.06134094151213) rotate(55) scale(1.05)"><path d="M-12 -3 C-10 8 7 10 12 -2 C7 3 -4 4 -12 -3Z" fill="#F8DE22" stroke="#F3D510" stroke-width="2.6" stroke-linejoin="round"/><path d="M11.5 -2 L13.5 -4.5" stroke="#B04A30" stroke-width="1.8" stroke-linecap="round"/></g><g transform="translate(208.55349500713268,61.62054208273895) rotate(70) scale(1.05)"><path d="M-12 -3 C-10 8 7 10 12 -2 C7 3 -4 4 -12 -3Z" fill="#F8DE22" stroke="#F3D510" stroke-width="2.6" stroke-linejoin="round"/><path d="M11.5 -2 L13.5 -4.5" stroke="#B04A30" stroke-width="1.8" stroke-linecap="round"/></g><g transform="translate(241.36376604850216,60.19400855920114) rotate(-15) scale(1.05)"><path d="M-12 -3 C-10 8 7 10 12 -2 C7 3 -4 4 -12 -3Z" fill="#F8DE22" stroke="#F3D510" stroke-width="2.6" stroke-linejoin="round"/><path d="M11.5 -2 L13.5 -4.5" stroke="#B04A30" stroke-width="1.8" stroke-linecap="round"/></g><g transform="translate(84.44507845934379,65.90014265335236) rotate(0) scale(1.05)"><path d="M-12 -3 C-10 8 7 10 12 -2 C7 3 -4 4 -12 -3Z" fill="#F8DE22" stroke="#F3D510" stroke-width="2.6" stroke-linejoin="round"/><path d="M11.5 -2 L13.5 -4.5" stroke="#B04A30" stroke-width="1.8" stroke-linecap="round"/></g><g transform="translate(138.65335235378032,67.32667617689016) rotate(-10) scale(1.05)"><path d="M-12 -3 C-10 8 7 10 12 -2 C7 3 -4 4 -12 -3Z" fill="#F8DE22" stroke="#F3D510" stroke-width="2.6" stroke-linejoin="round"/><path d="M11.5 -2 L13.5 -4.5" stroke="#B04A30" stroke-width="1.8" stroke-linecap="round"/></g><g transform="translate(21.677603423680456,67.32667617689016) rotate(35) scale(1.05)"><path d="M-12 -3 C-10 8 7 10 12 -2 C7 3 -4 4 -12 -3Z" fill="#F8DE22" stroke="#F3D510" stroke-width="2.6" stroke-linejoin="round"/><path d="M11.5 -2 L13.5 -4.5" stroke="#B04A30" stroke-width="1.8" stroke-linecap="round"/></g><g transform="translate(43.07560627674751,87.2981455064194) rotate(-40) scale(1.05)"><path d="M-12 -3 C-10 8 7 10 12 -2 C7 3 -4 4 -12 -3Z" fill="#F8DE22" stroke="#F3D510" stroke-width="2.6" stroke-linejoin="round"/><path d="M11.5 -2 L13.5 -4.5" stroke="#B04A30" stroke-width="1.8" stroke-linecap="round"/></g><g transform="translate(75.88587731811698,90.15121255349501) rotate(25) scale(1.05)"><path d="M-12 -3 C-10 8 7 10 12 -2 C7 3 -4 4 -12 -3Z" fill="#F8DE22" stroke="#F3D510" stroke-width="2.6" stroke-linejoin="round"/><path d="M11.5 -2 L13.5 -4.5" stroke="#B04A30" stroke-width="1.8" stroke-linecap="round"/></g><g transform="translate(161.47788873038516,83.01854493580599) rotate(-50) scale(1.05)"><path d="M-12 -3 C-10 8 7 10 12 -2 C7 3 -4 4 -12 -3Z" fill="#F8DE22" stroke="#F3D510" stroke-width="2.6" stroke-linejoin="round"/><path d="M11.5 -2 L13.5 -4.5" stroke="#B04A30" stroke-width="1.8" stroke-linecap="round"/></g><g transform="translate(190.00855920114122,87.2981455064194) rotate(30) scale(1.05)"><path d="M-12 -3 C-10 8 7 10 12 -2 C7 3 -4 4 -12 -3Z" fill="#F8DE22" stroke="#F3D510" stroke-width="2.6" stroke-linejoin="round"/><path d="M11.5 -2 L13.5 -4.5" stroke="#B04A30" stroke-width="1.8" stroke-linecap="round"/></g><g transform="translate(227.0984308131241,94.43081312410843) rotate(60) scale(1.05)"><path d="M-12 -3 C-10 8 7 10 12 -2 C7 3 -4 4 -12 -3Z" fill="#F8DE22" stroke="#F3D510" stroke-width="2.6" stroke-linejoin="round"/><path d="M11.5 -2 L13.5 -4.5" stroke="#B04A30" stroke-width="1.8" stroke-linecap="round"/></g><g transform="translate(248.49643366619117,93.00427960057061) rotate(50) scale(1.05)"><path d="M-12 -3 C-10 8 7 10 12 -2 C7 3 -4 4 -12 -3Z" fill="#F8DE22" stroke="#F3D510" stroke-width="2.6" stroke-linejoin="round"/><path d="M11.5 -2 L13.5 -4.5" stroke="#B04A30" stroke-width="1.8" stroke-linecap="round"/></g><g transform="translate(1.7061340941512126,93.00427960057061) rotate(60) scale(1.05)"><path d="M-12 -3 C-10 8 7 10 12 -2 C7 3 -4 4 -12 -3Z" fill="#F8DE22" stroke="#F3D510" stroke-width="2.6" stroke-linejoin="round"/><path d="M11.5 -2 L13.5 -4.5" stroke="#B04A30" stroke-width="1.8" stroke-linecap="round"/></g><g transform="translate(24.530670470756064,111.54921540656206) rotate(35) scale(1.05)"><path d="M-12 -3 C-10 8 7 10 12 -2 C7 3 -4 4 -12 -3Z" fill="#F8DE22" stroke="#F3D510" stroke-width="2.6" stroke-linejoin="round"/><path d="M11.5 -2 L13.5 -4.5" stroke="#B04A30" stroke-width="1.8" stroke-linecap="round"/></g><g transform="translate(58.76747503566334,114.40228245363767) rotate(65) scale(1.05)"><path d="M-12 -3 C-10 8 7 10 12 -2 C7 3 -4 4 -12 -3Z" fill="#F8DE22" stroke="#F3D510" stroke-width="2.6" stroke-linejoin="round"/><path d="M11.5 -2 L13.5 -4.5" stroke="#B04A30" stroke-width="1.8" stroke-linecap="round"/></g><g transform="translate(138.65335235378032,102.99001426533523) rotate(30) scale(1.05)"><path d="M-12 -3 C-10 8 7 10 12 -2 C7 3 -4 4 -12 -3Z" fill="#F8DE22" stroke="#F3D510" stroke-width="2.6" stroke-linejoin="round"/><path d="M11.5 -2 L13.5 -4.5" stroke="#B04A30" stroke-width="1.8" stroke-linecap="round"/></g><g transform="translate(178.5962910128388,114.40228245363767) rotate(60) scale(1.05)"><path d="M-12 -3 C-10 8 7 10 12 -2 C7 3 -4 4 -12 -3Z" fill="#F8DE22" stroke="#F3D510" stroke-width="2.6" stroke-linejoin="round"/><path d="M11.5 -2 L13.5 -4.5" stroke="#B04A30" stroke-width="1.8" stroke-linecap="round"/></g><g transform="translate(207.12696148359487,114.40228245363767) rotate(35) scale(1.05)"><path d="M-12 -3 C-10 8 7 10 12 -2 C7 3 -4 4 -12 -3Z" fill="#F8DE22" stroke="#F3D510" stroke-width="2.6" stroke-linejoin="round"/><path d="M11.5 -2 L13.5 -4.5" stroke="#B04A30" stroke-width="1.8" stroke-linecap="round"/></g><g transform="translate(247.06990014265335,120.10841654778888) rotate(-30) scale(1.05)"><path d="M-12 -3 C-10 8 7 10 12 -2 C7 3 -4 4 -12 -3Z" fill="#F8DE22" stroke="#F3D510" stroke-width="2.6" stroke-linejoin="round"/><path d="M11.5 -2 L13.5 -4.5" stroke="#B04A30" stroke-width="1.8" stroke-linecap="round"/></g><g transform="translate(7.412268188302425,135.80028530670472) rotate(-60) scale(1.05)"><path d="M-12 -3 C-10 8 7 10 12 -2 C7 3 -4 4 -12 -3Z" fill="#F8DE22" stroke="#F3D510" stroke-width="2.6" stroke-linejoin="round"/><path d="M11.5 -2 L13.5 -4.5" stroke="#B04A30" stroke-width="1.8" stroke-linecap="round"/></g><g transform="translate(37.36947218259629,137.2268188302425) rotate(-70) scale(1.05)"><path d="M-12 -3 C-10 8 7 10 12 -2 C7 3 -4 4 -12 -3Z" fill="#F8DE22" stroke="#F3D510" stroke-width="2.6" stroke-linejoin="round"/><path d="M11.5 -2 L13.5 -4.5" stroke="#B04A30" stroke-width="1.8" stroke-linecap="round"/></g><g transform="translate(185.7289586305278,138.65335235378032) rotate(-20) scale(1.05)"><path d="M-12 -3 C-10 8 7 10 12 -2 C7 3 -4 4 -12 -3Z" fill="#F8DE22" stroke="#F3D510" stroke-width="2.6" stroke-linejoin="round"/><path d="M11.5 -2 L13.5 -4.5" stroke="#B04A30" stroke-width="1.8" stroke-linecap="round"/></g><g transform="translate(221.39229671897291,137.2268188302425) rotate(-60) scale(1.05)"><path d="M-12 -3 C-10 8 7 10 12 -2 C7 3 -4 4 -12 -3Z" fill="#F8DE22" stroke="#F3D510" stroke-width="2.6" stroke-linejoin="round"/><path d="M11.5 -2 L13.5 -4.5" stroke="#B04A30" stroke-width="1.8" stroke-linecap="round"/></g><g transform="translate(247.06990014265335,141.50641940085592) rotate(-60) scale(1.05)"><path d="M-12 -3 C-10 8 7 10 12 -2 C7 3 -4 4 -12 -3Z" fill="#F8DE22" stroke="#F3D510" stroke-width="2.6" stroke-linejoin="round"/><path d="M11.5 -2 L13.5 -4.5" stroke="#B04A30" stroke-width="1.8" stroke-linecap="round"/></g><g transform="translate(252.77603423680455,75.88587731811698) rotate(40) scale(1.05)"><path d="M-12 -3 C-10 8 7 10 12 -2 C7 3 -4 4 -12 -3Z" fill="#F8DE22" stroke="#F3D510" stroke-width="2.6" stroke-linejoin="round"/><path d="M11.5 -2 L13.5 -4.5" stroke="#B04A30" stroke-width="1.8" stroke-linecap="round"/></g><path d="M58 151 C60 130 70 116 92 110 L100 109 L115 140 L133 109 L140 110 C156 116 164 130 166 151Z" fill="#3C3A3A"/><path d="M99 102 L129 102 L133 110 L115 140 L97 110Z" fill="#CBA690"/><path d="M86 90 C84 100 88 108 96 110 L102 94Z" fill="#8A8078"/><path d="M90 84 C88 62 98 50 114 50 C130 50 140 62 138 84Z" fill="#3A302C"/><ellipse cx="113.5" cy="87" rx="17" ry="22.5" fill="#D0AA96"/><path d="M97 78 C96 66 104 60 114 60 C124 60 131 66 130 78 C126 70 120 67 114 67 C106 67 100 70 97 78Z" fill="#3A302C"/><path d="M88 80 C86 58 98 48 114 48 C130 48 142 58 140 80" fill="none" stroke="#161616" stroke-width="4.5"/><path d="M92 62 L94 76" stroke="#E8E4E0" stroke-width="2"/><path d="M136 62 L134 76" stroke="#E8E4E0" stroke-width="2"/><rect x="86" y="72" width="12" height="21" rx="5" fill="#1C1C1C"/><rect x="128.5" y="72" width="13" height="21" rx="5" fill="#1C1C1C"/><path d="M104 81 l6 0.5 M118 81.5 l6 -0.5" stroke="#5A4035" stroke-width="1.5"/><path d="M109 99 l9 0" stroke="#A87868" stroke-width="1.2"/></g></g></svg><svg style="position:absolute;left:1659px;top:196px" width="257" height="146" viewBox="0 0 257 146"><defs><clipPath id="tc2"><rect width="257" height="146"/></clipPath><filter id="bl2" x="-5%" y="-5%" width="110%" height="110%"><feGaussianBlur stdDeviation="0.8"/></filter></defs><g clip-path="url(#tc2)"><g filter="url(#bl2)"><rect x="-5" y="-5" width="267" height="156" fill="#B6F4F7"/><path d="M118 0 L257 0 L257 30 C245 36 238 28 230 34 C222 30 214 38 205 32 C196 36 186 28 178 30 C170 26 160 34 150 28 C140 30 132 22 126 16 C120 10 118 4 118 0Z" fill="#D5E85C"/><circle cx="150" cy="12" r="5" fill="#9AB040"/><circle cx="170" cy="20" r="4" fill="#A8BC48"/><circle cx="135" cy="15" r="3" fill="#98A84A"/><circle cx="190" cy="10" r="4" fill="#B6C850"/><path d="M240 6 L257 4 L257 90 L240 80 Z" fill="#2A2838"/><path d="M220 58 C224 80 220 112 212 151 L258 151 L257 60 L240 56Z" fill="#B8C0C4"/><path d="M220 58 C224 80 220 112 212 151 L221 151 C228 112 232 85 230 58Z" fill="#2A3044"/><path d="M232 70 C240 90 236 110 244 130 L250 151 L258 151 L258 80Z" fill="#8A98A4" opacity="0.8"/><path d="M236 64 C242 90 236 120 242 146" stroke="#4A5664" stroke-width="1.6" fill="none"/><ellipse cx="238" cy="100" rx="6" ry="10" fill="#D8DCDC"/><rect x="203" y="33" width="43" height="24" fill="#DB7640"/><rect x="205" y="35" width="1.4" height="20" fill="#6A2A18"/><rect x="210" y="35" width="1.4" height="20" fill="#6A2A18"/><rect x="215" y="35" width="1.4" height="20" fill="#6A2A18"/><rect x="220" y="35" width="1.4" height="20" fill="#6A2A18"/><rect x="225" y="35" width="1.4" height="20" fill="#6A2A18"/><rect x="230" y="35" width="1.4" height="20" fill="#6A2A18"/><rect x="235" y="35" width="1.4" height="20" fill="#6A2A18"/><rect x="240" y="35" width="1.4" height="20" fill="#6A2A18"/><rect x="203" y="55" width="44" height="3" fill="#8A3A22"/><path d="M208 6 C215 2 225 4 228 12 C234 16 240 24 238 34 L218 34 C214 26 210 18 208 6Z" fill="#F2EEE4"/><path d="M222 16 L236 30 M226 14 L238 24" stroke="#C86A2A" stroke-width="2"/><path d="M160 118 C165 112 172 116 170 126 L162 130Z" fill="#F0EEE8"/><rect x="172" y="132" width="7" height="12" fill="#B02020"/><circle cx="148" cy="108" r="2" fill="#C89060"/><circle cx="156" cy="104" r="1.5" fill="#C89060"/><path d="M43 146 C48 128 64 116 88 111 L130 111 C152 116 170 128 176 146Z" fill="#413A32"/><path d="M108 110 C112 122 130 124 138 114 L132 106 L110 104Z" fill="#D9B49A"/><path d="M91 80 C88 96 92 112 104 117 C118 120 128 112 132 100 L132 76 L95 70Z" fill="#D7A98A"/><path d="M89 90 C86 68 92 52 112 50 C132 48 146 60 145 80 C144 90 140 96 133 98 C134 86 130 80 122 78 C112 76 98 78 92 72Z" fill="#7A5438"/><path d="M92 86 L128 84" stroke="#E8D2C0" stroke-width="1.2"/></g></g></svg><svg style="position:absolute;left:1659px;top:346px" width="257" height="146" viewBox="0 0 257 146"><defs><clipPath id="tc3"><rect width="257" height="146"/></clipPath><filter id="bl3" x="-5%" y="-5%" width="110%" height="110%"><feGaussianBlur stdDeviation="0.8"/></filter></defs><g clip-path="url(#tc3)"><g filter="url(#bl3)"><defs><linearGradient id="w3" x1="0" y1="0" x2="1" y2="0"><stop offset="0" stop-color="#E2D6B8"/><stop offset="0.6" stop-color="#EAE0C8"/><stop offset="1" stop-color="#F0EADC"/></linearGradient></defs><rect x="-5" y="-5" width="267" height="156" fill="url(#w3)"/><rect x="0" y="0" width="257" height="22" fill="#DDD2B6" opacity="0.6"/><path d="M122 146 L124 40 C130 26 168 22 190 34 L196 146Z" fill="#F2ECDC"/><path d="M214 20 L257 6 L257 146 L238 146 L238 26Z" fill="#F5F2EA"/><path d="M212 22 L238 26 L238 146 L214 146Z" fill="#DCD2BC"/><path d="M12 42 L76 42 L74 58 L24 58 L14 112 L2 112Z" fill="#8E877C"/><path d="M24 58 L72 58 L68 84 L20 98Z" fill="#3E352E"/><path d="M30 62 L62 62 L60 72 L32 74Z" fill="#6A5A4A"/><path d="M74 86 L84 90 L96 100 L74 102Z" fill="#B8A890"/><path d="M0 92 C8 86 22 84 34 88 L48 104 C70 102 100 102 120 104 C150 104 170 104 180 112 C190 122 196 134 202 146 L0 146Z" fill="#8DB4DC"/><path d="M120 104 L140 106 L150 146 L130 146Z" fill="#A6C4E4"/><path d="M60 110 C70 120 66 136 70 146" stroke="#7AA0C8" stroke-width="2" fill="none"/><path d="M34 94 L84 44 L100 56 L52 106 C46 108 38 104 34 94Z" fill="#D6AC94"/><path d="M80 40 C88 34 100 40 112 50 C120 56 128 58 128 64 C120 66 108 64 96 64 C88 64 80 60 80 40Z" fill="#D6AE96"/><path d="M146 40 C160 44 168 60 166 84 L160 100 L150 96 Z" fill="#6A4C3A"/><ellipse cx="134" cy="62" rx="21" ry="26" fill="#D9B29C"/><path d="M118 86 L152 86 L154 110 L122 108Z" fill="#D4AA92"/><rect x="107" y="64" width="11" height="20" rx="5" fill="#2A2E38"/><rect x="154" y="50" width="13" height="34" rx="6" fill="#2A2E38"/><path d="M150 96 C154 104 152 118 156 130" stroke="#5A4030" stroke-width="3" fill="none"/><path d="M86 20 C92 12 106 14 114 26 L128 56 C130 64 126 68 120 66 L94 38 C86 30 82 26 86 20Z" fill="#D6D8DE"/><path d="M90 20 C96 16 104 18 108 24" stroke="#F4F4F6" stroke-width="2.5" fill="none"/><path d="M103 36 L119 58 L124 54 L109 32Z" fill="#263060"/><path d="M96 44 L104 52" stroke="#E8B040" stroke-width="3"/></g></g></svg><svg style="position:absolute;left:1659px;top:496px" width="257" height="146" viewBox="0 0 257 146"><defs><clipPath id="tc4"><rect width="257" height="146"/></clipPath><filter id="bl4" x="-5%" y="-5%" width="110%" height="110%"><feGaussianBlur stdDeviation="0.8"/></filter></defs><g clip-path="url(#tc4)"><g filter="url(#bl4)"><defs><linearGradient id="sky4" x1="0" y1="0" x2="0" y2="1"><stop offset="0" stop-color="#EADFE8"/><stop offset="0.3" stop-color="#DCC4D6"/><stop offset="0.6" stop-color="#E2B8CC"/><stop offset="0.85" stop-color="#D2BCD4"/><stop offset="1" stop-color="#A8AED4"/></linearGradient><linearGradient id="pk4" x1="0" x2="1"><stop offset="0" stop-color="#E8A8BC" stop-opacity="0"/><stop offset="0.65" stop-color="#F4A8BA" stop-opacity="0.85"/><stop offset="1" stop-color="#F0B0C0" stop-opacity="0.4"/></linearGradient><linearGradient id="city4" x1="0" y1="0" x2="0" y2="1"><stop offset="0" stop-color="#5A6090"/><stop offset="0.3" stop-color="#424872"/><stop offset="1" stop-color="#3A3E66"/></linearGradient></defs><rect x="-5" y="-5" width="267" height="65" fill="url(#sky4)"/><rect x="-5" y="14" width="267" height="14" fill="url(#pk4)"/><path d="M-5 52 C40 48 80 50 117 49 C130 40 150 38 168 48 C200 50 230 49 262 51 L262 60 L-5 60Z" fill="#A4A2C8"/><rect x="-5" y="56" width="267" height="95" fill="url(#city4)"/><path d="M22 68 C40 62 80 63 88 72 L90 80 L22 82Z" fill="#B0A8CC"/><rect x="60" y="64" width="16" height="10" fill="#C0B0C8"/><rect x="10" y="57" width="11" height="40" fill="#222440"/><rect x="44" y="57" width="10" height="40" fill="#222440"/><path d="M-5 96 L120 90 L257 92 L257 100 L120 99 L-5 108Z" fill="#2E3250"/><rect x="-5" y="73" width="100" height="6" fill="#6A6088" opacity="0.7"/><path d="M228 37 L230 37 L231 66 L242 78 L216 78 L227 66Z" fill="#4E9C9C"/><rect x="196" y="66" width="22" height="11" fill="#C8B890"/><rect x="238" y="66" width="18" height="11" fill="#B8A890"/><rect x="186" y="78" width="71" height="9" fill="#C8C4DC"/><circle cx="50" cy="74" r="1.5" fill="#FFE8C8"/><circle cx="70" cy="88" r="1.2" fill="#FFE0C0"/><circle cx="30" cy="84" r="1.2" fill="#FFE0C0"/><path d="M70 112 C120 110 180 114 262 114 L262 128 C200 128 150 130 70 124Z" fill="#B0B0DC"/><rect x="25" y="121" width="48" height="20" fill="#9A5058"/><rect x="65" y="121" width="40" height="20" fill="#B08890"/><rect x="55" y="115" width="45" height="7" fill="#8890B8"/><rect x="-5" y="136" width="28" height="15" fill="#B85070"/><rect x="25" y="141" width="80" height="10" fill="#6870A8"/><path d="M94 146 C100 132 112 126 126 124 L160 124 C178 128 194 134 198 146Z" fill="#E9E6DA"/><path d="M126 110 L158 110 L160 126 L146 134 L124 126Z" fill="#C9A48C"/><ellipse cx="141" cy="94" rx="21" ry="31" fill="#CDA68E"/><path d="M117 96 C114 70 124 56 142 57 C160 58 170 72 168 96 C166 86 162 76 152 72 C140 70 126 74 120 90Z" fill="#2A2222"/><path d="M126 86 l8 0 M148 86 l8 0" stroke="#3A2A24" stroke-width="1.6"/><path d="M134 113 l12 0" stroke="#9A6A5A" stroke-width="2"/></g></g></svg><svg style="position:absolute;left:1659px;top:646px" width="257" height="146" viewBox="0 0 257 146"><defs><clipPath id="tc5"><rect width="257" height="146"/></clipPath><filter id="bl5" x="-5%" y="-5%" width="110%" height="110%"><feGaussianBlur stdDeviation="0.8"/></filter></defs><g clip-path="url(#tc5)"><g filter="url(#bl5)"><rect x="-5" y="-5" width="267" height="156" fill="#4E433A"/><rect x="0" y="0" width="12" height="130" fill="#D8D4CC"/><rect x="12" y="0" width="50" height="146" fill="#7C6E60"/><rect x="0" y="125" width="15" height="21" fill="#9A8A78"/><rect x="58" y="0" width="106" height="100" fill="#2E2824"/><rect x="84" y="2" width="74" height="20" fill="#564A40"/><rect x="88" y="15" width="28" height="5" fill="#C8C070"/><rect x="84" y="30" width="20" height="30" fill="#6A3028"/><rect x="92" y="30" width="4" height="30" fill="#D8D0C8"/><rect x="60" y="60" width="40" height="40" fill="#4A4440"/><path d="M40 10 C50 30 44 60 52 90 C58 110 50 130 54 146" stroke="#4A6A3A" stroke-width="5" fill="none"/><ellipse cx="70" cy="50" rx="14" ry="10" fill="#2A3A2A"/><path d="M34 92 C44 80 60 82 66 90 C54 96 44 98 34 92Z" fill="#5A8A3A"/><circle cx="36" cy="78" r="6" fill="#E8A030"/><circle cx="36" cy="78" r="3" fill="#3A50A0"/><rect x="24" y="95" width="10" height="50" fill="#8A98A8"/><ellipse cx="82" cy="88" rx="11" ry="7" fill="#C8C0B8"/><rect x="180" y="-5" width="82" height="125" fill="#EEE6DC"/><rect x="186" y="60" width="56" height="44" fill="#8AA872"/><rect x="186.0" y="0" width="3.2" height="120" fill="#F6F0E6"/><rect x="194.2" y="0" width="3.2" height="120" fill="#F6F0E6"/><rect x="202.4" y="0" width="3.2" height="120" fill="#F6F0E6"/><rect x="210.6" y="0" width="3.2" height="120" fill="#F6F0E6"/><rect x="218.8" y="0" width="3.2" height="120" fill="#F6F0E6"/><rect x="227.0" y="0" width="3.2" height="120" fill="#F6F0E6"/><rect x="235.2" y="0" width="3.2" height="120" fill="#F6F0E6"/><rect x="243.39999999999998" y="0" width="3.2" height="120" fill="#F6F0E6"/><rect x="251.6" y="0" width="3.2" height="120" fill="#F6F0E6"/><rect x="186" y="40" width="62" height="4" fill="#B8A898"/><rect x="186" y="104" width="62" height="8" fill="#D8D8D0"/><rect x="168" y="0" width="12" height="146" fill="#7E7060"/><rect x="180" y="118" width="77" height="28" fill="#8A7A68"/><rect x="242" y="74" width="15" height="72" fill="#141010"/><rect x="194" y="134" width="14" height="12" fill="#222"/><rect x="222" y="134" width="12" height="12" fill="#C8A070"/><path d="M48 146 C52 120 66 104 96 98 L150 98 C170 104 180 120 182 146Z" fill="#DCD8D4"/><path d="M74 102 L170 102" stroke="#2C2C46" stroke-width="2.6"/><path d="M71 107 L171 107" stroke="#2C2C46" stroke-width="2.6"/><path d="M68 112 L172 112" stroke="#2C2C46" stroke-width="2.6"/><path d="M65 117 L173 117" stroke="#2C2C46" stroke-width="2.6"/><path d="M62 122 L174 122" stroke="#2C2C46" stroke-width="2.6"/><path d="M59 127 L175 127" stroke="#2C2C46" stroke-width="2.6"/><path d="M56 132 L176 132" stroke="#2C2C46" stroke-width="2.6"/><path d="M53 137 L177 137" stroke="#2C2C46" stroke-width="2.6"/><path d="M50 142 L178 142" stroke="#2C2C46" stroke-width="2.6"/><path d="M100 96 C112 106 134 106 146 96 L140 90 L106 90Z" fill="#C89C86"/><ellipse cx="124" cy="70" rx="23" ry="29" fill="#C49A84"/><path d="M98 62 C98 40 110 32 124 32 C140 32 152 42 150 62 C146 50 136 44 124 44 C112 44 102 50 98 62Z" fill="#8A7060"/><path d="M94 72 C92 44 106 34 124 34 C144 34 158 46 156 72" fill="none" stroke="#151515" stroke-width="3"/><rect x="90" y="62" width="10" height="26" rx="5" fill="#1A1A1A"/><rect x="148" y="62" width="10" height="26" rx="5" fill="#1A1A1A"/><path d="M112 90 C114 82 128 80 138 86 C144 96 146 112 142 126 C138 136 126 138 120 130 C114 118 110 102 112 90Z" fill="#CFA28A"/><path d="M118 92 L136 90 M118 98 L138 97" stroke="#B08068" stroke-width="1"/><path d="M110 66 l8 0 M130 66 l8 0" stroke="#3A2A24" stroke-width="1.6"/></g></g></svg>
</body></html>
